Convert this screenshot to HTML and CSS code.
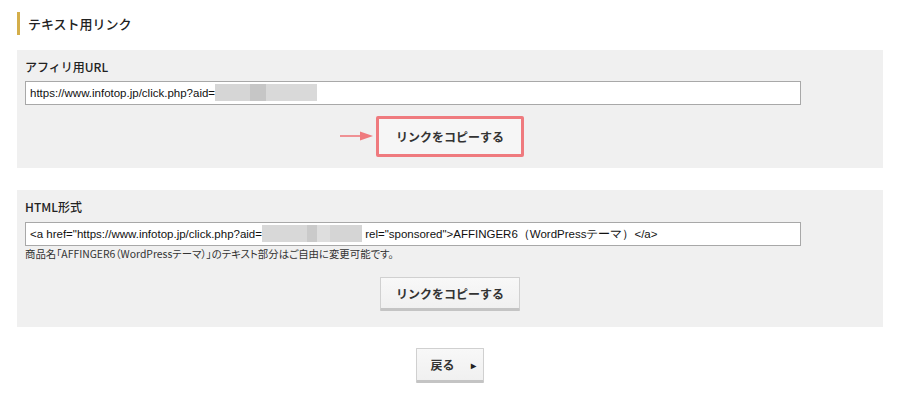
FILE: index.html
```html
<!DOCTYPE html>
<html lang="ja">
<head>
<meta charset="utf-8">
<link rel="stylesheet" href="styles.css">
</head>
<body>
<div class="page">
  <h2 class="heading">テキスト用リンク</h2>

  <section class="panel panel-url">
    <div class="label">アフィリ用URL</div>
    <div class="field">https://www.infotop.jp/click.php?aid=<span class="blur"><span class="b1"></span><span class="b2"></span><span class="b3"></span></span></div>
    <div class="actions actions-url">
      <span class="arrow"><svg width="34" height="10" viewBox="0 0 34 10"><line x1="0" y1="5" x2="24" y2="5" stroke="#ef7a7e" stroke-width="1.6"/><path d="M20 0.5 L33 5 L20 9.5 Z" fill="#ef7a7e"/></svg></span>
      <button class="btn btn-marked">リンクをコピーする</button>
    </div>
  </section>

  <section class="panel panel-html">
    <div class="label">HTML形式</div>
    <div class="field">&lt;a href="https://www.infotop.jp/click.php?aid=<span class="blur blur2"><span class="c1"></span><span class="c2"></span><span class="c3"></span><span class="c4"></span></span> rel="sponsored"&gt;AFFINGER6（WordPressテーマ）&lt;/a&gt;</div>
    <p class="note">商品名「AFFINGER6（WordPressテーマ）」のテキスト部分はご自由に変更可能です。</p>
    <div class="actions actions-html">
      <button class="btn">リンクをコピーする</button>
    </div>
  </section>

  <div class="back-wrap">
    <button class="btn btn-back">戻る<span class="tri">▸</span></button>
  </div>
</div>
</body>
</html>
```
FILE: styles.css
```css
* { box-sizing: border-box; }
html, body { margin: 0; padding: 0; background: #fff; }
body {
  font-family: "Noto Sans CJK JP", "Liberation Sans", sans-serif;
  color: #222;
}
.page {
  width: 900px;
  padding: 12px 17px 0 17px;
}
.heading {
  margin: 0;
  height: 23px;
  border-left: 3px solid #d4ae4a;
  padding-left: 8px;
  font-size: 13px;
  font-weight: 500;
  line-height: 23px;
  color: #222;
}
.panel {
  background: #f0f0f0;
  padding: 8px 8px 11px 8px;
}
.panel-url { margin-top: 15px; }
.panel-html { margin-top: 22px; padding-bottom: 16px; }
.label {
  font-size: 12px;
  font-weight: 500;
  line-height: 18px;
  color: #222;
}
.field {
  margin-top: 5px;
  width: 776px;
  height: 24px;
  background: #fff;
  border: 1px solid #a8a8a8;
  padding: 0 4px;
  font-family: "Liberation Sans", Arial, sans-serif;
  font-size: 11.5px;
  line-height: 22px;
  color: #111;
  white-space: nowrap;
  overflow: hidden;
}
.panel-html .field { margin-top: 6px; }
.blur {
  display: inline-flex;
  vertical-align: middle;
  height: 17px;
  margin-top: -3px;
}
.blur span { display: block; height: 100%; }
.b1 { width: 35px; background: #d6d6d6; }
.b2 { width: 16px; background: #c6c6c6; }
.b3 { width: 51px; background: #d9d9d9; }
.c1 { width: 45px; background: #d8d8d8; }
.c2 { width: 10px; background: #cacaca; }
.c3 { width: 13px; background: #dedede; }
.c4 { width: 32px; background: #d5d5d5; }
.note {
  margin: 1px 0 0 0;
  font-size: 10.4px;
  line-height: 14px;
  color: #333;
  font-feature-settings: "palt";
}
.actions {
  display: flex;
  justify-content: center;
  position: relative;
}
.actions-url { margin-top: 11px; }
.actions-html { margin-top: 16px; }
.arrow {
  position: absolute;
  left: 315px;
  top: 15px;
  line-height: 0;
}
.btn {
  font-family: "Noto Sans CJK JP", "Liberation Sans", sans-serif;
  font-size: 12px;
  font-weight: bold;
  color: #333;
  width: 140px;
  height: 34px;
  background: linear-gradient(#f8f8f8, #f0f0f0);
  border: 1px solid #d0d0d0;
  border-bottom: 3px solid #c4c4c4;
  border-radius: 1px;
  padding: 0;
  margin: 0;
  cursor: pointer;
}
.btn-marked {
  width: 148px;
  height: 41px;
  background: #f6f6f6;
  border: 3px solid #ef7a7e;
  border-radius: 2px;
}
.back-wrap {
  display: flex;
  justify-content: center;
  margin-top: 21px;
}
.btn-back {
  width: 68px;
  height: 35px;
  display: flex;
  align-items: center;
  justify-content: center;
  gap: 16px;
  padding-left: 6px;
}
.tri {
  font-size: 10px;
  color: #222;
}
```
